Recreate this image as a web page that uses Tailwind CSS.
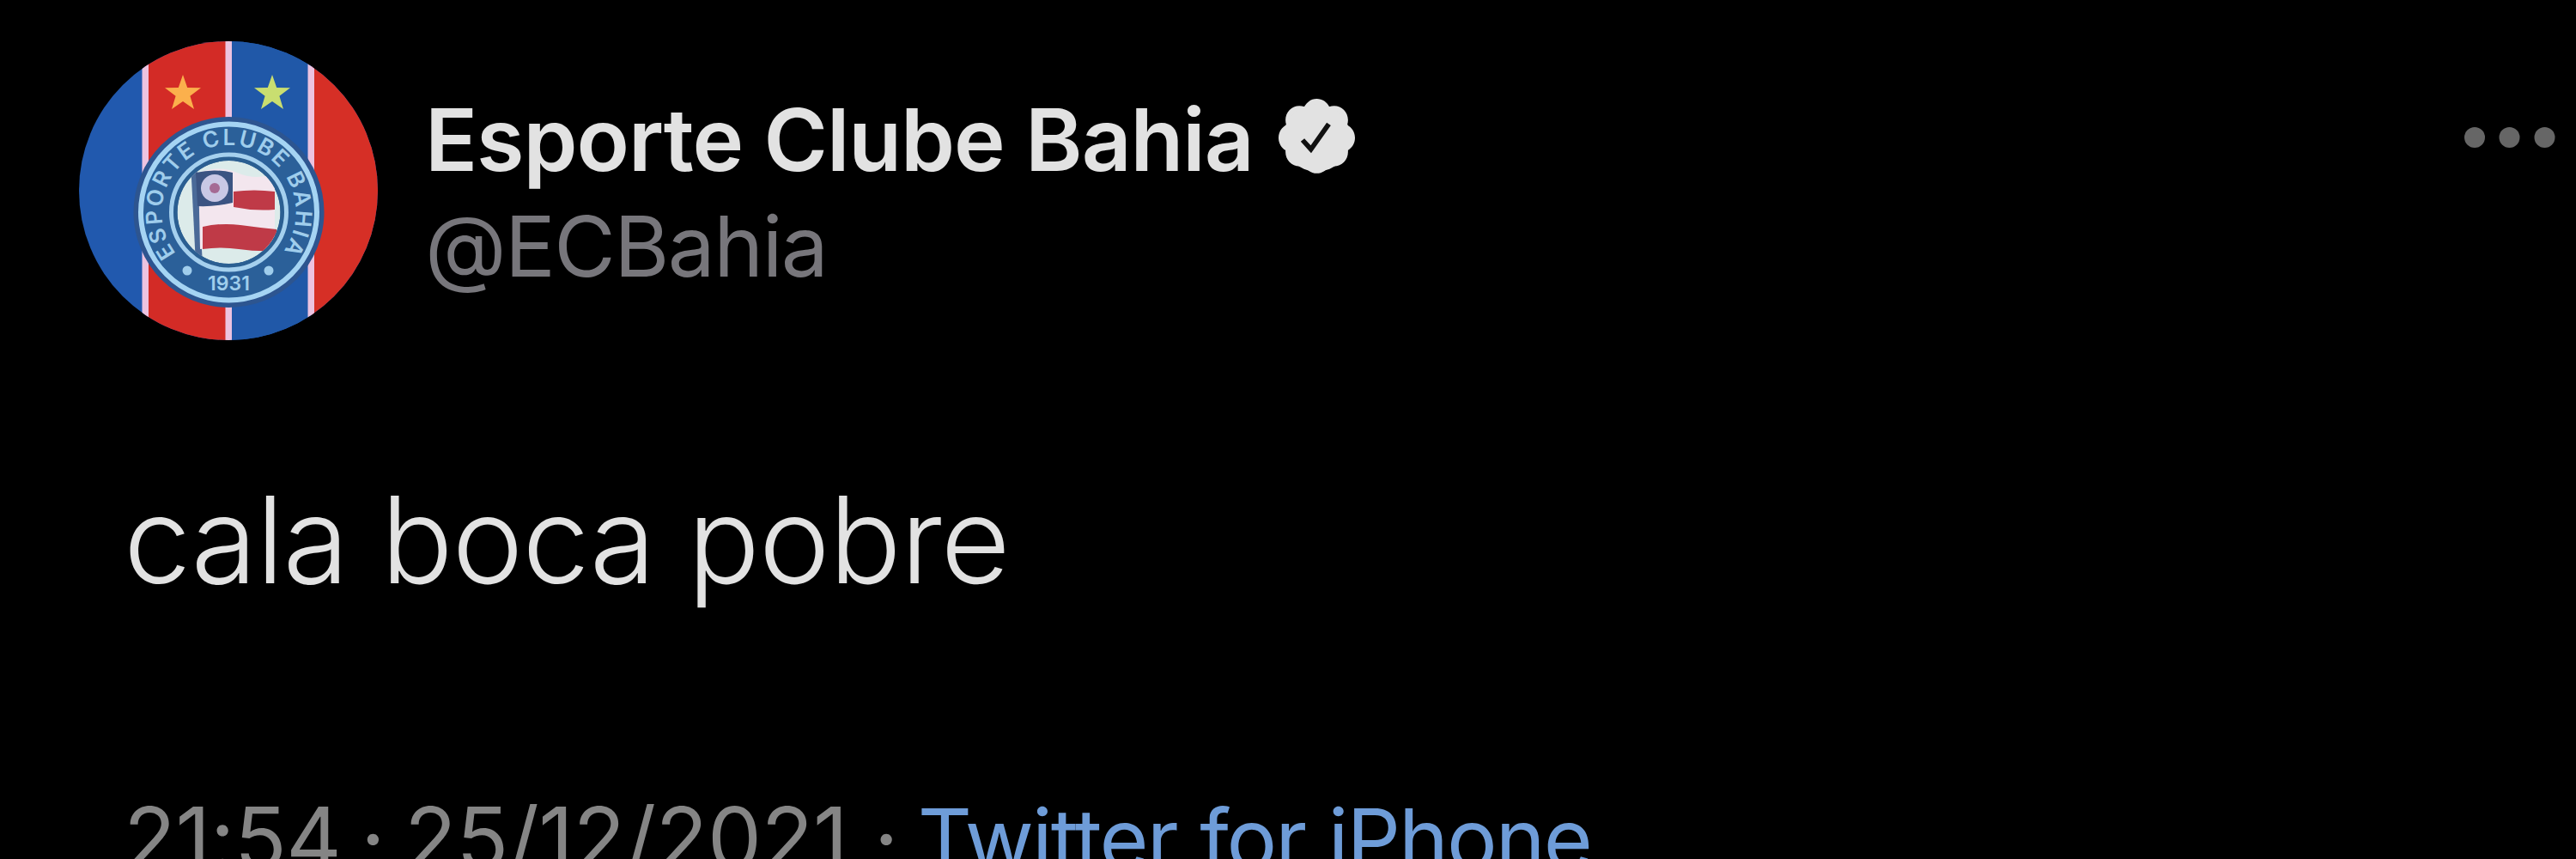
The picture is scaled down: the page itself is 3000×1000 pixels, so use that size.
<!DOCTYPE html>
<html lang="pt-BR">
<head>
    <meta charset="UTF-8">
    <meta name="viewport" content="width=device-width, initial-scale=1.0">
    <title>Esporte Clube Bahia (@ECBahia)</title>
    <script src="https://cdn.jsdelivr.net/npm/@tailwindcss/browser@4"></script>
</head>
<body class="bg-black">
    <article class="w-[3000px] h-[1000px] overflow-hidden bg-black pt-[48px] font-['Inter',sans-serif]">
        <!-- Author -->
        <header class="flex items-start pl-[92px] pr-[24px] h-[348px]">
            <svg class="size-[348px] shrink-0" viewBox="0 0 348 348" role="img" aria-label="Esporte Clube Bahia">
                <defs>
                    <clipPath id="avatar"><circle cx="174" cy="174" r="174"/></clipPath>
                    <path id="ring" d="M113 247A78 78 0 1 1 237.600 244.800"/>
                    <clipPath id="flag"><circle cx="174.500" cy="199" r="60"/></clipPath>
                    <path id="star" d="M0-22 5.200-7 21-6.800 8.400 2.700 13 18 0 9-13 18-8.400 2.700-21-6.800-5.200-7Z"/>
                </defs>
                <g clip-path="url(#avatar)">
                    <rect width="348" height="348" fill="#2159ae"/>
                    <rect x="77" width="98" height="348" fill="#d32b26"/>
                    <rect x="175" width="96" height="348" fill="#2058a8"/>
                    <rect x="271" width="77" height="348" fill="#d62f26"/>
                    <g fill="#ecc3e0">
                        <rect x="73.500" width="7.500" height="348"/>
                        <rect x="170.500" width="7.500" height="348"/>
                        <rect x="266.500" width="7.500" height="348"/>
                    </g>
                    <use href="#star" x="121" y="61" fill="#fbb04c"/>
                    <use href="#star" x="225" y="61" fill="#c9de70"/>
                    <!-- Crest -->
                    <circle cx="174.500" cy="199" r="111" fill="#2d5590"/>
                    <circle cx="174.500" cy="199" r="102.500" fill="#2b6099" stroke="#a5d4f3" stroke-width="6"/>
                    <circle cx="174.500" cy="199" r="67" fill="#2b5f92" stroke="#a5d0ee" stroke-width="5"/>
                    <g clip-path="url(#flag)">
                        <circle cx="174.500" cy="199" r="60" fill="#dcebea"/>
                        <path d="M130 140h7l7 120h-8Z" fill="#4a6a98"/>
                        <path d="M139 153q25-9 45 0t44 2v88q-22-2-43-3t-44 2Z" fill="#f3e6ee"/>
                        <path d="M180 175q24-3 48 0v21q-24 2-48-3Z" fill="#bf3a47"/>
                        <path d="M144 216q22-5 44-2t42 5v25q-24 1-44-2t-42 0Z" fill="#bf3a47"/>
                        <path d="M136 153q22-5 43 0v35q-22 5-41 4Z" fill="#3b5482"/>
                        <circle cx="158" cy="171" r="16" fill="#c9c8e5"/>
                        <circle cx="158" cy="171" r="6" fill="#a56a94"/>
                    </g>
                    <g fill="#9fcdec" class="font-semibold">
                        <text font-size="26"><textPath href="#ring" textLength="344">ESPORTE CLUBE BAHIA</textPath></text>
                        <text x="174.500" y="290" font-size="23" text-anchor="middle">1931</text>
                        <circle cx="126" cy="267" r="5.500"/>
                        <circle cx="221" cy="267" r="5.500"/>
                    </g>
                </g>
            </svg>
            <div class="ml-[55px] pt-[54px]">
                <div class="flex items-center h-[120px]">
                    <h1 class="text-[101px] leading-[120px] tracking-[-1.05px] font-semibold text-[#e2e2e2] whitespace-nowrap">Esporte Clube Bahia</h1>
                    <svg class="w-[89px] h-[91px] ml-[29px] mb-[3px] shrink-0" viewBox="1.5 1.5 21 22" preserveAspectRatio="none" role="img" aria-label="Conta verificada">
                        <path fill="#e2e2e2" d="M22.500 12.500c0-1.580-.875-2.950-2.148-3.600.154-.435.238-.905.238-1.400 0-2.210-1.710-3.998-3.818-3.998-.47 0-.92.084-1.336.25C14.818 2.415 13.510 1.500 12 1.500s-2.816.917-3.437 2.250c-.415-.165-.866-.25-1.336-.25-2.110 0-3.818 1.790-3.818 4 0 .494.083.964.237 1.400-1.272.65-2.147 2.018-2.147 3.600 0 1.495.782 2.798 1.942 3.486-.02.17-.032.34-.032.514 0 2.210 1.708 4 3.818 4 .47 0 .92-.086 1.335-.25.62 1.334 1.926 2.250 3.437 2.250 1.512 0 2.818-.916 3.437-2.250.415.163.865.248 1.336.248 2.110 0 3.818-1.790 3.818-4 0-.174-.012-.344-.033-.513 1.158-.687 1.943-1.990 1.943-3.484z"/>
                        <ellipse cx="12" cy="12.500" rx="9.200" ry="9.500" fill="#e2e2e2"/>
                        <path d="M8.100 13.100l2.300 2.600 4.900-7.100" fill="none" stroke="#111" stroke-width="1.350"/>
                    </svg>
                </div>
                <p class="mt-[5px] text-[98px] leading-[120px] tracking-[-1.6px] text-[#77767b] whitespace-nowrap">@ECBahia</p>
            </div>
            <button type="button" class="ml-auto mt-[100px]" aria-label="Mais">
                <svg class="w-[106px] h-[24px]" viewBox="0 0 106 24" fill="#666">
                    <circle cx="12" cy="12" r="12"/>
                    <circle cx="52.500" cy="12" r="12"/>
                    <circle cx="93.500" cy="12" r="12"/>
                </svg>
            </button>
        </header>

        <!-- Tweet text -->
        <p class="mt-[142px] pl-[144px] text-[140px] leading-[180px] tracking-[-1.2px] font-[350] text-[#e2e2e2] whitespace-nowrap">cala boca pobre</p>

        <!-- Date and source -->
        <div class="mt-[198px] pl-[144px] text-[100px] leading-[120px] tracking-[-0.5px] [word-spacing:-5px] text-[#858585] whitespace-nowrap">
            <span>21:54</span> <span>·</span> <span>25/12/2021</span> <span class="ml-[8px]">·</span> <a href="#" class="text-[98px] tracking-[-2px] [word-spacing:1px] text-[#6e9cd8]">Twitter for iPhone</a>
        </div>
    </article>
</body>
</html>
